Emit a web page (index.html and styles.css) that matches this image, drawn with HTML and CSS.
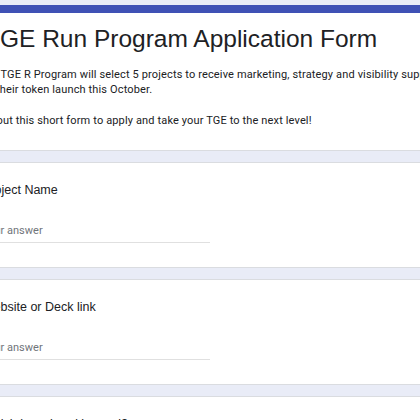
FILE: index.html
```html
<!DOCTYPE html>
<html lang="en">
<head>
<meta charset="utf-8">
<title>TGE Run Program Application Form</title>
<link rel="stylesheet" href="styles.css">
</head>
<body>
<main class="form">
  <section class="card header-card">
    <div class="accent"></div>
    <div class="header-body">
      <h1 class="title">TGE Run Program Application Form</h1>
      <p class="desc">The TGE R Program will select 5 projects to receive marketing, strategy and visibility support for their token launch this October.<br><br>Fill out this short form to apply and take your TGE to the next level!</p>
    </div>
  </section>
  <section class="card question">
    <div class="q-title">Project Name</div>
    <div class="answer">Your answer</div>
  </section>
  <section class="card question">
    <div class="q-title">Website or Deck link</div>
    <div class="answer">Your answer</div>
  </section>
  <section class="card question">
    <div class="q-title">Which launchpad is used?</div>
    <div class="answer">Your answer</div>
  </section>
</main>
</body>
</html>
```
FILE: styles.css
```css
html, body {
  margin: 0;
  padding: 0;
}
body {
  background: #e9ecf7;
  overflow: hidden;
  font-family: Roboto, "Liberation Sans", Arial, sans-serif;
  color: #202124;
  width: 420px;
  height: 420px;
}
.form {
  width: 500px;
  margin: 5px 0 0 -38px;
  display: flex;
  flex-direction: column;
  gap: 10.5px;
}
.card {
  background: #fff;
  border: 1px solid #dadce0;
  border-radius: 6px;
}
.header-card {
  border-top: none;
  overflow: hidden;
}
.accent {
  height: 8px;
  background: #3f51b5;
}
.header-body {
  padding: 10.5px 11px 21.5px 16px;
}
.title {
  margin: 0;
  padding-left: 6px;
  font-family: "Liberation Sans", Arial, sans-serif;
  font-weight: 400;
  font-size: 24.5px;
  line-height: 30px;
  color: #202124;
  white-space: nowrap;
}
.desc {
  margin: 13px 0 0 0;
  font-size: 11px;
  line-height: 15.5px;
  letter-spacing: 0.14px;
  color: #202124;
}
.question {
  padding: 18px 19px 24.5px 19px;
}
.q-title {
  font-family: "Liberation Sans", Arial, sans-serif;
  font-size: 12.5px;
  line-height: 18px;
  color: #202124;
}
.answer {
  margin-top: 24.5px;
  width: 228px;
  font-size: 11px;
  line-height: 16px;
  padding-bottom: 2.5px;
  border-bottom: 1px solid #e0e0e0;
  color: #70757a;
}
```
